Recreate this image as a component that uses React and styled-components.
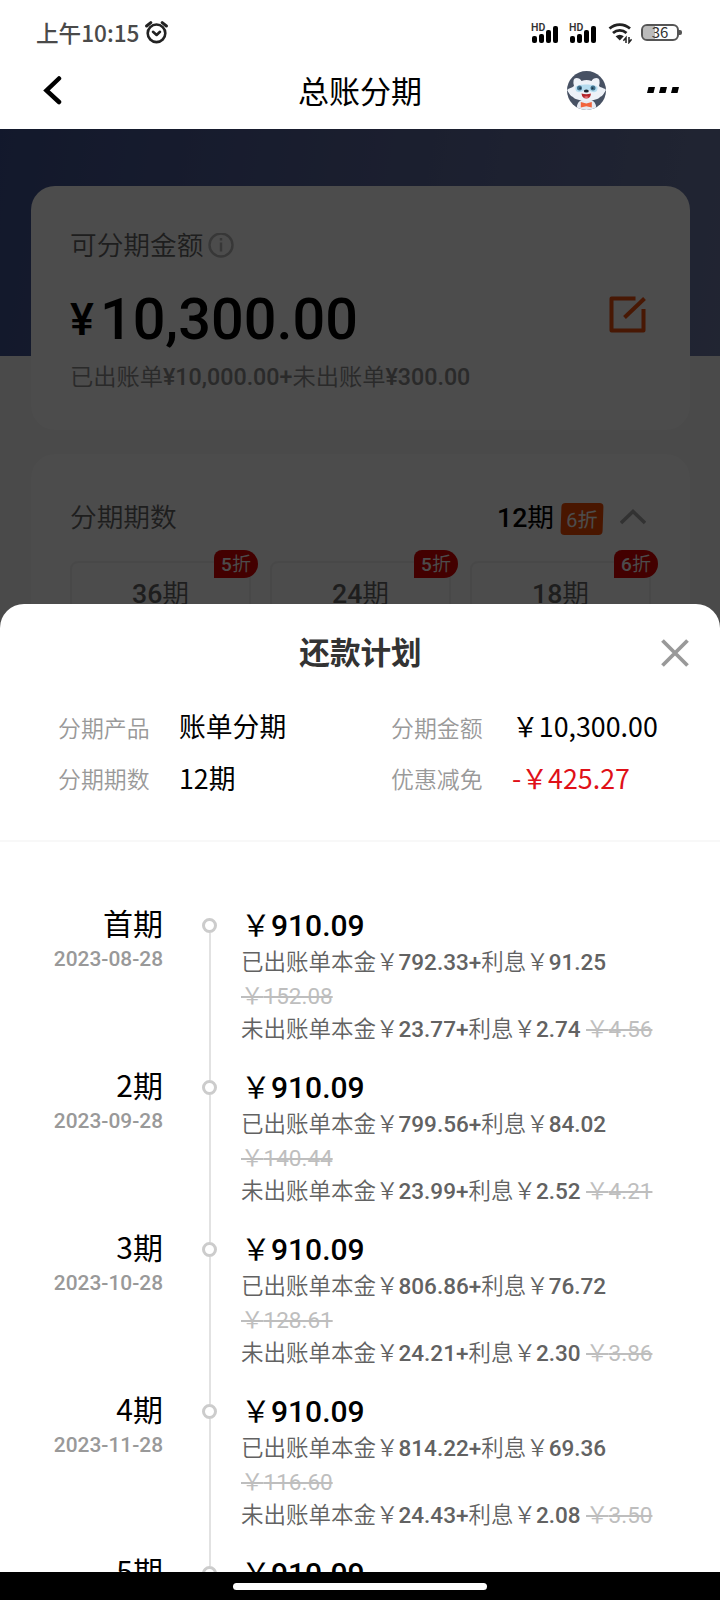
import React from 'react'
import styled, { createGlobalStyle } from 'styled-components'

const GlobalStyle = createGlobalStyle`
    * {
        box-sizing: border-box;
    }
    body {
        margin: 0;
        background: #000000;
        font-family: Roboto, "Noto Sans CJK SC", sans-serif;
        font-weight: 350;
    }
`

const plan = [
    { name: '首期', date: '2023-08-28', billed: '792.33', interest: '91.25', was: '152.08', unbilled: '23.77', fee: '2.74', feeWas: '4.56' },
    { name: '2期', date: '2023-09-28', billed: '799.56', interest: '84.02', was: '140.44', unbilled: '23.99', fee: '2.52', feeWas: '4.21' },
    { name: '3期', date: '2023-10-28', billed: '806.86', interest: '76.72', was: '128.61', unbilled: '24.21', fee: '2.30', feeWas: '3.86' },
    { name: '4期', date: '2023-11-28', billed: '814.22', interest: '69.36', was: '116.60', unbilled: '24.43', fee: '2.08', feeWas: '3.50' },
    { name: '5期' },
]

const options = [
    { count: 36, rate: 5 },
    { count: 24, rate: 5 },
    { count: 18, rate: 6 },
]

const Screen = styled.div`
    position: relative;
    width: 720px;
    height: 1600px;
    overflow: hidden;
    display: flex;
    flex-direction: column;
    background: #FFFFFF;
`
// Digits are heavier than the Chinese text around them
const Num = styled.span`
    font-weight: 500;
`

// Status bar and title bar
const StatusBar = styled.div`
    height: 60px;
    padding: 5px 41px 0 36px;
    display: flex;
    align-items: center;
    justify-content: space-between;
`
const Clock = styled.div`
    display: flex;
    align-items: center;
    gap: 6px;
    color: #4a4a4a;
    font: 500 22.6px/30px "Noto Sans CJK SC", sans-serif;
`
const StatusIcons = styled.div`
    display: flex;
    align-items: center;
`
const Signal = styled.div`
    position: relative;
    width: 28px;
    height: 20px;
    margin-right: 10px;
    display: flex;
    align-items: flex-end;
    gap: 1.6px;
    padding-left: 1px;
`
const Bar = styled.i`
    width: 5.4px;
    height: ${props => props.$height}px;
    border-radius: 2px;
    background: #000000;
`
const Hd = styled.span`
    position: absolute;
    left: 0;
    top: 0;
    font: 600 10.5px/10px Roboto, sans-serif;
    color: #333333;
`
const WifiSvg = styled.svg`
    margin: 0 9px 0 1px;
`
const Battery = styled.div`
    position: relative;
    width: 38px;
    height: 17px;
    border: 2px solid #555555;
    border-radius: 6px;
    background: linear-gradient(90deg, #BBBBBB 36%, #FFFFFF 36%);
    background-clip: padding-box;
    color: #333333;
    font: 400 15px/12px "Noto Sans CJK SC", sans-serif;
    text-align: center;

    &::after {
        content: '';
        position: absolute;
        right: -5px;
        top: 4px;
        width: 3px;
        height: 5px;
        border-radius: 0 2px 2px 0;
        background: #555555;
    }
`
const TitleBar = styled.div`
    height: 69px;
    padding: 0 41px 9px 43px;
    display: grid;
    grid-template-columns: 255px auto 1fr;
    align-items: center;
`
const PageTitle = styled.h1`
    margin: 0;
    font: 400 31px/44px "Noto Sans CJK SC", sans-serif;
    color: #000000;
`
const TitleActions = styled.div`
    display: flex;
    align-items: center;
    justify-content: flex-end;
    gap: 41px;
`

// Dimmed page behind the sheet
const Page = styled.div`
    position: relative;
    height: 520px;
    padding: 57px 30px 0 31px;
    background: linear-gradient(100deg, #3f5393 0%, #5a679d 50%, #6f7ca9 100%) 0 0 / 100% 227px no-repeat #F7F7F7;
`
const Mask = styled.div`
    position: absolute;
    inset: 0;
    background: rgba(0, 0, 0, 0.7);
`
const Card = styled.section`
    height: ${props => props.$height}px;
    margin-bottom: 24px;
    padding: 0 39px;
    border-radius: 24px;
    background: #FDFDFD;
`
const Caption = styled.div`
    display: flex;
    align-items: center;
    gap: 5px;
    padding-top: 40px;
    color: #666666;
    font-size: 26.7px;
    line-height: 40px;
`
const TotalRow = styled.div`
    display: flex;
    align-items: center;
    justify-content: space-between;
    height: 70px;
    margin-top: 19px;
    padding-right: 5px;
`
const Total = styled.div`
    display: flex;
    align-items: center;
    color: #000000;
    font-size: 57.6px;
    font-weight: 500;
    line-height: 72px;
`
const Yen = styled.span`
    font-size: 45px;
    margin-right: 6px;
`
const EditIcon = styled.svg`
    margin-bottom: 12px;
`
const Note = styled.div`
    margin-top: 5px;
    color: #8c8c8c;
    font-size: 23.25px;
    line-height: 34px;
`
const PeriodRow = styled.div`
    display: flex;
    align-items: center;
    padding: 44px 5px 0 0;
    color: #666666;
    font-size: 26.7px;
    line-height: 40px;
`
const Period = styled.span`
    margin-left: auto;
    color: #000000;
    font-weight: 400;
`
const Discount = styled.span`
    width: 42px;
    height: 32px;
    margin: 1px 17px 0 7px;
    border-radius: 4px;
    transform: skewX(-2deg);
    background: #f54c00;
    color: #FFFFFF;
    font-size: 20px;
    font-weight: 400;
    line-height: 34px;
    text-align: center;
`
const Options = styled.div`
    display: grid;
    grid-template-columns: repeat(3, 181px);
    gap: 19px;
    margin-top: 23px;
`
const Option = styled.div`
    position: relative;
    height: 90px;
    padding-top: 11px;
    border: 2px solid #F2F2F2;
    border-radius: 8px;
    color: #666666;
    font-size: 26.7px;
    line-height: 40px;
    text-align: center;
`
const Tag = styled.span`
    position: absolute;
    right: -9px;
    top: -13px;
    width: 44px;
    height: 28px;
    border-radius: 8px 14px 14px 0;
    background: #e00000;
    color: #FFFFFF;
    font-size: 19px;
    line-height: 29px;
    text-align: center;
`

// Repayment plan sheet
const Sheet = styled.section`
    position: relative;
    margin-top: -45px;
    height: 968px;
    overflow: hidden;
    border-radius: 24px 24px 0 0;
    background: #FFFFFF;
`
const SheetHeader = styled.header`
    display: grid;
    grid-template-columns: 1fr auto 1fr;
    align-items: center;
    height: 97px;
    padding: 0 31px 0 32px;
`
const SheetTitle = styled.h2`
    grid-column: 2;
    margin: 0 0 3px;
    color: #333333;
    font: 700 30.6px/44px "Noto Sans CJK SC", sans-serif;
`
const CloseButton = styled.button`
    justify-self: end;
    display: flex;
    padding: 0;
    border: 0;
    background: none;
`
const Summary = styled.dl`
    display: grid;
    grid-template-columns: 121px 212px 121px 1fr;
    grid-auto-rows: 51.6px;
    align-items: center;
    height: 141px;
    margin: 0;
    padding-left: 58px;
    border-bottom: 2px solid #F8F8F8;
    font-family: "Noto Sans CJK SC", sans-serif;
`
const Label = styled.dt`
    color: #999999;
    font-size: 22.9px;
`
const Value = styled.dd`
    margin: 0;
    color: ${props => props.$color || '#000000'};
    font-size: 26.8px;
    font-weight: 400;
    line-height: 40px;
    padding-bottom: 1px;
    white-space: nowrap;
`
const Timeline = styled.div`
    padding-top: 62px;
`
const Item = styled.article`
    display: flex;
    height: 162px;
`
const When = styled.div`
    width: 163px;
    text-align: right;
`
const Term = styled.div`
    font: 400 30px/36px "Noto Sans CJK SC", sans-serif;
    color: #000000;
`
const DateText = styled.div`
    padding-top: 3px;
    color: #999999;
    font-size: 20.9px;
    font-weight: 500;
    line-height: 32px;
`
const Axis = styled.div`
    width: 15px;
    margin: 14px 24px -14px 39px;
    display: flex;
    flex-direction: column;
    align-items: center;
`
const Dot = styled.i`
    width: 15px;
    height: 15px;
    border: 3px solid #CCCCCC;
    border-radius: 50%;
`
const Line = styled.i`
    flex: 1;
    width: 2px;
    background: #E2E2E2;
`
const Detail = styled.div`
    width: 440px;
    color: #626262;
    font-size: 22.5px;
    line-height: 33.5px;
`
const Amount = styled.div`
    margin-bottom: -2px;
    color: #000000;
    font-size: 30px;
    line-height: 44px;
    font-weight: 400;
`
const Old = styled.del`
    color: #BEBEBE;
    font-weight: 400;
`
const HomeBar = styled.footer`
    height: 28px;
    display: flex;
    justify-content: center;
    padding-top: 11px;
    background: #000000;

    &::before {
        content: '';
        width: 254px;
        height: 7px;
        border-radius: 4px;
        background: #FFFFFF;
    }
`

function AlarmIcon() {
    return (
        <svg width="23" height="23" viewBox="0 0 23 23" fill="none" stroke="#222" strokeWidth="2.6" strokeLinecap="round" strokeLinejoin="round">
            <circle cx="11.5" cy="12.3" r="8.8" />
            <path d="M1.6 5 5.8 1.6M21.4 5 17.2 1.6" strokeWidth="3" />
            <path d="M8 10.8l3.6 3.2L15 10.8" />
        </svg>
    )
}

function WifiIcon() {
    return (
        <WifiSvg width="24" height="22" viewBox="0 0 24 22" fill="none" stroke="#222" strokeWidth="2.8">
            <path d="M1.5 6.5c6-5.3 14.5-5.3 20.500 0" />
            <path d="M5 11c4-3.6 9.500-3.6 13.500 0" />
            <path d="M7.6 14.2Q11.8 11.2 15.8 14.2L11.8 18.4Z" fill="#222" stroke="none" />
            <path d="M18 21v-5.500l-2.600 3.200M21 15v5.500l2.600-3.200" strokeWidth="1.5" />
        </WifiSvg>
    )
}

function Mascot() {
    return (
        <svg width="39" height="39" viewBox="0 0 39 39">
            <defs>
                <clipPath id="face"><circle cx="19.5" cy="19.5" r="19.5" /></clipPath>
            </defs>
            <g clipPath="url(#face)">
                <rect width="39" height="39" fill="#475163" />
                <path d="M10 39C9 33 12 28 19.5 28S30 33 29 39Z" fill="#e6eaf2" />
                <path d="M7 15Q5 7 9.500 7Q13 7 14.500 10Q19.500 8 24.500 10Q26 7 29.500 7Q34 7 32 15C34 17 38 17 39 19C37 22 36 25 33 26C29 31 10 31 6 26C3 25 2 22 0 19C2 17 5 17 7 15Z" fill="#edf1f7" />
                <path d="M8.500 16C11 12.500 28 12.500 30.500 16C31 21 28 22 24 20.500Q19.500 17 15 20.500C11 22 8 21 8.500 16Z" fill="#b5dcef" />
                <circle cx="12.5" cy="17" r="2.5" fill="#3f6f8c" />
                <circle cx="26" cy="17" r="2.5" fill="#3f6f8c" />
                <circle cx="13.2" cy="17.2" r="1" fill="#1d3546" />
                <circle cx="25.5" cy="17.2" r="1" fill="#1d3546" />
                <ellipse cx="19.3" cy="20" rx="2.5" ry="1.6" fill="#1c2530" />
                <path d="M14.5 22.5Q19.3 23.8 24 22.5Q23.5 27.5 19.3 27.5T14.5 22.5Z" fill="#b3262b" />
                <path d="M16.8 26Q19.3 24.5 21.8 26Q19.3 28 16.8 26Z" fill="#f0747a" />
                <path d="M13.8 31l5.500 1.500 5.500-1.500v5.500l-5.500-1.300-5.500 1.300Z" fill="#f2643d" />
            </g>
        </svg>
    )
}

function SignalBars() {
    return (
        <Signal>
            <Hd>HD</Hd>
            <Bar $height={6.5} />
            <Bar $height={9} />
            <Bar $height={13} />
            <Bar $height={16.5} />
        </Signal>
    )
}

function PlanItem({ item }) {
    return (
        <Item>
            <When>
                <Term>{item.name}</Term>
                <DateText>{item.date}</DateText>
            </When>
            <Axis>
                <Dot />
                <Line />
            </Axis>
            <Detail>
                <Amount>￥<Num>910.09</Num></Amount>
                {item.billed && (
                    <>
                        <div>已出账单本金￥<Num>{item.billed}+</Num>利息￥<Num>{item.interest}</Num></div>
                        <div><Old>￥{item.was}</Old></div>
                        <div>未出账单本金￥<Num>{item.unbilled}+</Num>利息￥<Num>{item.fee}</Num> <Old>￥{item.feeWas}</Old></div>
                    </>
                )}
            </Detail>
        </Item>
    )
}

export default function App() {
    return (
        <Screen>
            <GlobalStyle />
            <StatusBar>
                <Clock>
                    <span>上午10:15</span>
                    <AlarmIcon />
                </Clock>
                <StatusIcons>
                    <SignalBars />
                    <SignalBars />
                    <WifiIcon />
                    <Battery>36</Battery>
                </StatusIcons>
            </StatusBar>
            <TitleBar>
                <svg width="20" height="30" viewBox="0 0 20 30" fill="none" stroke="#000" strokeWidth="4.5" strokeLinecap="round">
                    <path d="M16 3.5 3.5 15.5l12.5 11.5" />
                </svg>
                <PageTitle>总账分期</PageTitle>
                <TitleActions>
                    <Mascot />
                    <svg width="32" height="8" viewBox="0 0 32 8">
                        <path d="M1.5 1h6.5L6.5 7H0ZM13.5 1H20l-1.5 6H12ZM25.5 1H32l-1.5 6H24Z" />
                    </svg>
                </TitleActions>
            </TitleBar>

            <Page>
                <Card $height={244}>
                    <Caption>
                        可分期金额
                        <svg width="26" height="26" viewBox="0 0 26 26" fill="none" stroke="#b8b8b8" strokeWidth="2.4">
                            <circle cx="13" cy="12" r="11.5" />
                            <path d="M13 9.5V18.5M13 5v2.5" />
                        </svg>
                    </Caption>
                    <TotalRow>
                        <Total><Yen>¥</Yen>10,300.00</Total>
                        <EditIcon width="37" height="37" viewBox="0 0 37 37" fill="none" stroke="#f0500f" strokeWidth="4">
                            <path d="M26.5 2.5H2.5V34.5H34.5V13" strokeLinejoin="round" />
                            <path d="M15.5 21.5 35.5 2.5" />
                        </EditIcon>
                    </TotalRow>
                    <Note>已出账单<Num>¥10,000.00+</Num>未出账单<Num>¥300.00</Num></Note>
                </Card>
                <Card $height={190}>
                    <PeriodRow>
                        分期期数
                        <Period><Num>12</Num>期</Period>
                        <Discount>6折</Discount>
                        <svg width="26" height="18" viewBox="0 0 26 18" fill="none" stroke="#a8a8a8" strokeWidth="3.5">
                            <path d="M1 14 13 2.500l12 11.500" />
                        </svg>
                    </PeriodRow>
                    <Options>
                        {options.map(option => (
                            <Option key={option.count}>
                                <Num>{option.count}</Num>期
                                <Tag><Num>{option.rate}</Num>折</Tag>
                            </Option>
                        ))}
                    </Options>
                </Card>
                <Mask />
            </Page>

            <Sheet>
                <SheetHeader>
                    <SheetTitle>还款计划</SheetTitle>
                    <CloseButton aria-label="关闭">
                        <svg width="28" height="28" viewBox="0 0 28 28" fill="none" stroke="#999" strokeWidth="3.8">
                            <path d="M1.5 1.5l25 25M26.5 1.5l-25 25" />
                        </svg>
                    </CloseButton>
                </SheetHeader>
                <Summary>
                    <Label>分期产品</Label>
                    <Value>账单分期</Value>
                    <Label>分期金额</Label>
                    <Value>￥10,300.00</Value>
                    <Label>分期期数</Label>
                    <Value>12期</Value>
                    <Label>优惠减免</Label>
                    <Value $color="#e01018">-￥425.27</Value>
                </Summary>
                <Timeline>
                    {plan.map(item => <PlanItem key={item.name} item={item} />)}
                </Timeline>
            </Sheet>
            <HomeBar />
        </Screen>
    )
}
